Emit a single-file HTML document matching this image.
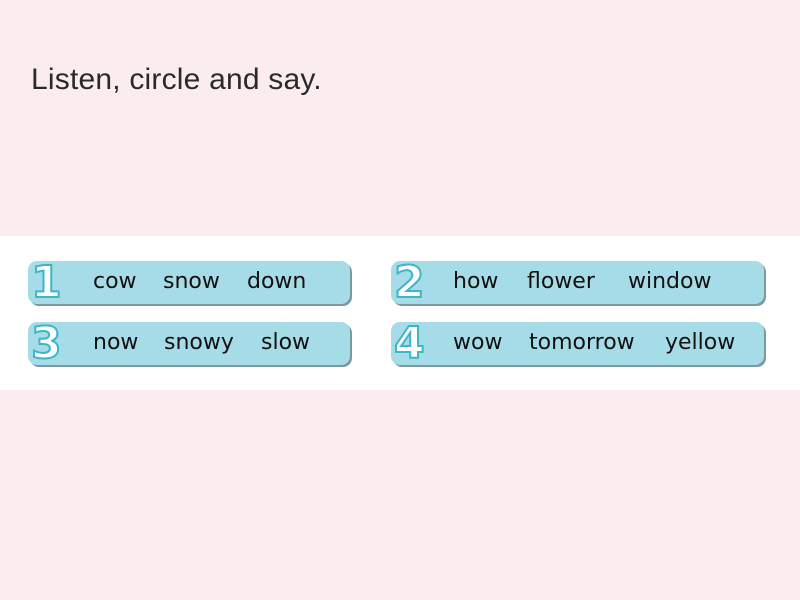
<!DOCTYPE html>
<html><head><style>
body{margin:0;width:800px;height:600px;background:#fbedef;position:relative;overflow:hidden;font-family:"Liberation Sans",sans-serif}
.t{position:absolute;left:31px;top:63px;font-size:30px;color:#2a2a2a;letter-spacing:0.2px}
.band{position:absolute;left:0;top:236px;width:800px;height:154px;background:#fff}
.bar{position:absolute;height:43px;background:#a6dce7;border-radius:9px;box-shadow:2px 2px 0 #7a9aa0}
.n{position:absolute;top:-4px;left:3px;font-size:44px;font-weight:bold;color:#fff;-webkit-text-stroke:2px #3cb6c8;font-family:"DejaVu Sans",sans-serif}
.w{position:absolute;top:8px;font-size:22px;color:#111;font-family:"DejaVu Sans",sans-serif}
</style></head><body>
<div class="t">Listen, circle and say.</div>
<div class="band"></div>
<div class="bar" style="left:28px;top:261px;width:322px"><span class="n">1</span><span class="w" style="left:65px">cow</span><span class="w" style="left:135px">snow</span><span class="w" style="left:219px">down</span></div>
<div class="bar" style="left:28px;top:322px;width:322px"><span class="n">3</span><span class="w" style="left:65px">now</span><span class="w" style="left:136px">snowy</span><span class="w" style="left:233px">slow</span></div>
<div class="bar" style="left:391px;top:261px;width:373px"><span class="n">2</span><span class="w" style="left:62px">how</span><span class="w" style="left:136px">flower</span><span class="w" style="left:237px">window</span></div>
<div class="bar" style="left:391px;top:322px;width:373px"><span class="n">4</span><span class="w" style="left:62px">wow</span><span class="w" style="left:138px">tomorrow</span><span class="w" style="left:274px">yellow</span></div>
</body></html>
